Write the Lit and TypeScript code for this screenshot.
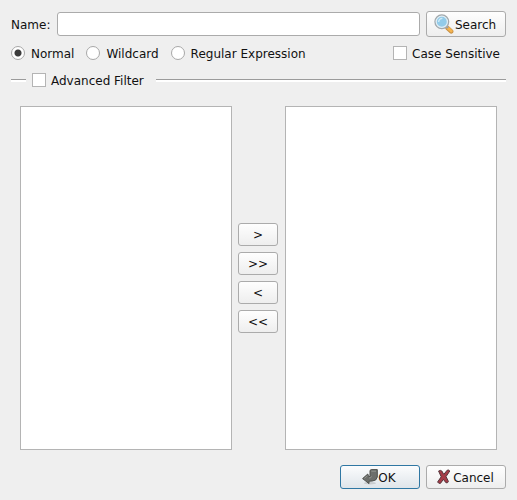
import { LitElement, html, css } from "lit";
import { customElement, state } from "lit/decorators.js";

const searchIcon = html`<svg class="icon" viewBox="0 0 20 20" aria-hidden="true">
  <path d="M13.4 13.8 L17.2 17.4" stroke="#c58f45" stroke-width="4.4" stroke-linecap="round" />
  <path d="M13.8 13.8 L17.2 17" stroke="#f5b44f" stroke-width="3" stroke-linecap="round" />
  <path d="M12 12 L14 14" stroke="#9b9ea1" stroke-width="2.4" />
  <circle cx="7.8" cy="7.8" r="6.8" fill="#92cbe9" stroke="#a3a8ab" stroke-width="1.4" />
  <circle cx="7.8" cy="7.8" r="5.6" fill="none" stroke="#e3eef4" stroke-width="1.2" />
  <path d="M4.6 8 Q5 4.6 8.4 4.4" fill="none" stroke="#d3ecf8" stroke-width="1.4" />
</svg>`;

const okIcon = html`<svg class="icon small" viewBox="0 0 16 16" aria-hidden="true">
  <ellipse cx="8" cy="14.2" rx="6" ry="1.2" fill="#c9cdd0" />
  <path d="M8 1.4 L9.2 .6 H15.3 V8 Q14.6 11.8 10.4 12 L7 12.2 V14.6 L.6 9.6 L5.8 5 L6.6 7.6 L8 7.4 Z"
    fill="#6c6e6b" stroke="#4e504d" stroke-linejoin="round" />
  <path d="M9.4 2.2 H14 M2.4 9.4 L5.4 6.8 M7 9 Q9.4 9 9.6 7.4" fill="none" stroke="#92948f" />
</svg>`;

const cancelIcon = html`<svg class="icon small" viewBox="0 0 16 16" aria-hidden="true">
  <path d="M2.6 2 Q4.6 .8 5.8 2 L7.8 5.4 L11.2 1.2 Q13 .6 13.8 2 L10 7.6 L12.4 12.4 Q12 14.2 10 13.8 L7.4 10.4 L4.4 14.4 Q2.4 14.6 1.6 13 L5.2 7.8 Z"
    fill="#a63c48" stroke="#54353a" stroke-linejoin="round" />
</svg>`;

@customElement("app-root")
export class AppRoot extends LitElement {
  @state() private mode = "Normal";

  static styles = css`
    :host {
      display: flex;
      flex-direction: column;
      box-sizing: border-box;
      min-height: 100vh;
      padding: 11px;
      background: #efefef;
      color: #111;
      font: 12px/14px "DejaVu Sans", sans-serif;
    }
    * { box-sizing: border-box; }
    input, button, select { font: inherit; color: inherit; margin: 0; }
    .row { display: flex; align-items: center; }
    .name { gap: 7px; }
    .caption { padding-top: 2px; }
    .text {
      flex: 1;
      min-width: 0;
      height: 24px;
      padding: 0 4px;
      background: #fff;
      border: 1px solid #ababab;
      border-radius: 3px;
    }
    .btn {
      display: flex;
      align-items: center;
      justify-content: center;
      width: 80px;
      height: 24px;
      padding: 0 2px 0 0;
      border: 1px solid #ababab;
      border-radius: 3px;
      background: linear-gradient(#fefefe, #eeeeee);
    }
    .search { height: 26px; gap: 1px; margin-left: -1px; }
    .move { width: 40px; height: 23px; padding: 1px 0 0; }
    .default { border-color: #2f77a3; background: linear-gradient(#fbfcfd, #dfe5ea); }
    .icon { width: 20px; height: 20px; fill: none; }
    .small { width: 16px; height: 16px; }
    .modes { gap: 12px; margin-top: 8px; }
    .option { display: flex; align-items: center; gap: 6px; white-space: nowrap; }
    .case { margin-left: auto; padding-right: 6px; }
    .tick, .radio {
      appearance: none;
      flex: none;
      width: 14px;
      height: 14px;
      border: 1px solid #b4b4b4;
      background: #fff;
    }
    .check { gap: 5px; }
    .tick:checked { background: #444; box-shadow: inset 0 0 0 3px #fff; }
    .radio { border-radius: 50%; border-color: #a8a8a8; }
    .radio:checked { background: radial-gradient(circle, #3c3c3c 3px, #fff 4px); }
    .advanced {
      display: flex;
      flex-direction: column;
      flex: 1;
      min-width: 0;
      margin: 11px 0 0;
      padding: 0;
      border: 0;
    }
    .title::before, .title::after {
      content: "";
      height: 2px;
      border-top: 1px solid #9b9b9b;
      background: #fff;
    }
    .title::before { width: 15px; margin-right: 6px; }
    .title::after { flex: 1; margin-left: 12px; }
    .lists {
      display: grid;
      grid-template-columns: 1fr 41px 1fr;
      gap: 6px;
      flex: 1;
      padding: 18px 9px 0;
    }
    .list {
      appearance: none;
      width: 100%;
      height: 100%;
      min-width: 0;
      min-height: 120px;
      padding: 0;
      border: 1px solid #b4b4b4;
      border-radius: 0;
      background: #fff;
    }
    .moves { display: flex; flex-direction: column; justify-content: center; gap: 6px; }
    .actions { justify-content: flex-end; gap: 6px; margin-top: 15px; }
    .cancel { gap: 1px; }
  `;

  private radio(label: string) {
    return html`<label class="option">
      <input class="radio" type="radio" name="mode" .checked=${this.mode === label}
        @change=${() => (this.mode = label)} /><span class="caption">${label}</span></label>`;
  }

  private check(label: string, extra = "") {
    return html`<label class="option check ${extra}">
      <input class="tick" type="checkbox" /><span class="caption">${label}</span></label>`;
  }

  render() {
    return html`
      <div class="row name">
        <label class="caption" for="name">Name:</label>
        <input class="text" id="name" type="text" />
        <button class="btn search" type="button">${searchIcon}<span class="caption">Search</span></button>
      </div>
      <div class="row modes">
        ${["Normal", "Wildcard", "Regular Expression"].map((m) => this.radio(m))}
        ${this.check("Case Sensitive", "case")}
      </div>
      <section class="advanced">
        <div class="row title">${this.check("Advanced Filter")}</div>
        <div class="lists">
          <select class="list" multiple aria-label="Available filters"></select>
          <div class="moves">
            ${[[">", "Add"], [">>", "Add all"], ["<", "Remove"], ["<<", "Remove all"]].map(
              ([sign, title]) => html`<button class="btn move" type="button" aria-label=${title}>${sign}</button>`
            )}
          </div>
          <select class="list" multiple aria-label="Selected filters"></select>
        </div>
      </section>
      <div class="row actions">
        <button class="btn default" type="button">${okIcon}<span class="caption">OK</span></button>
        <button class="btn cancel" type="button">${cancelIcon}<span class="caption">Cancel</span></button>
      </div>
    `;
  }
}
